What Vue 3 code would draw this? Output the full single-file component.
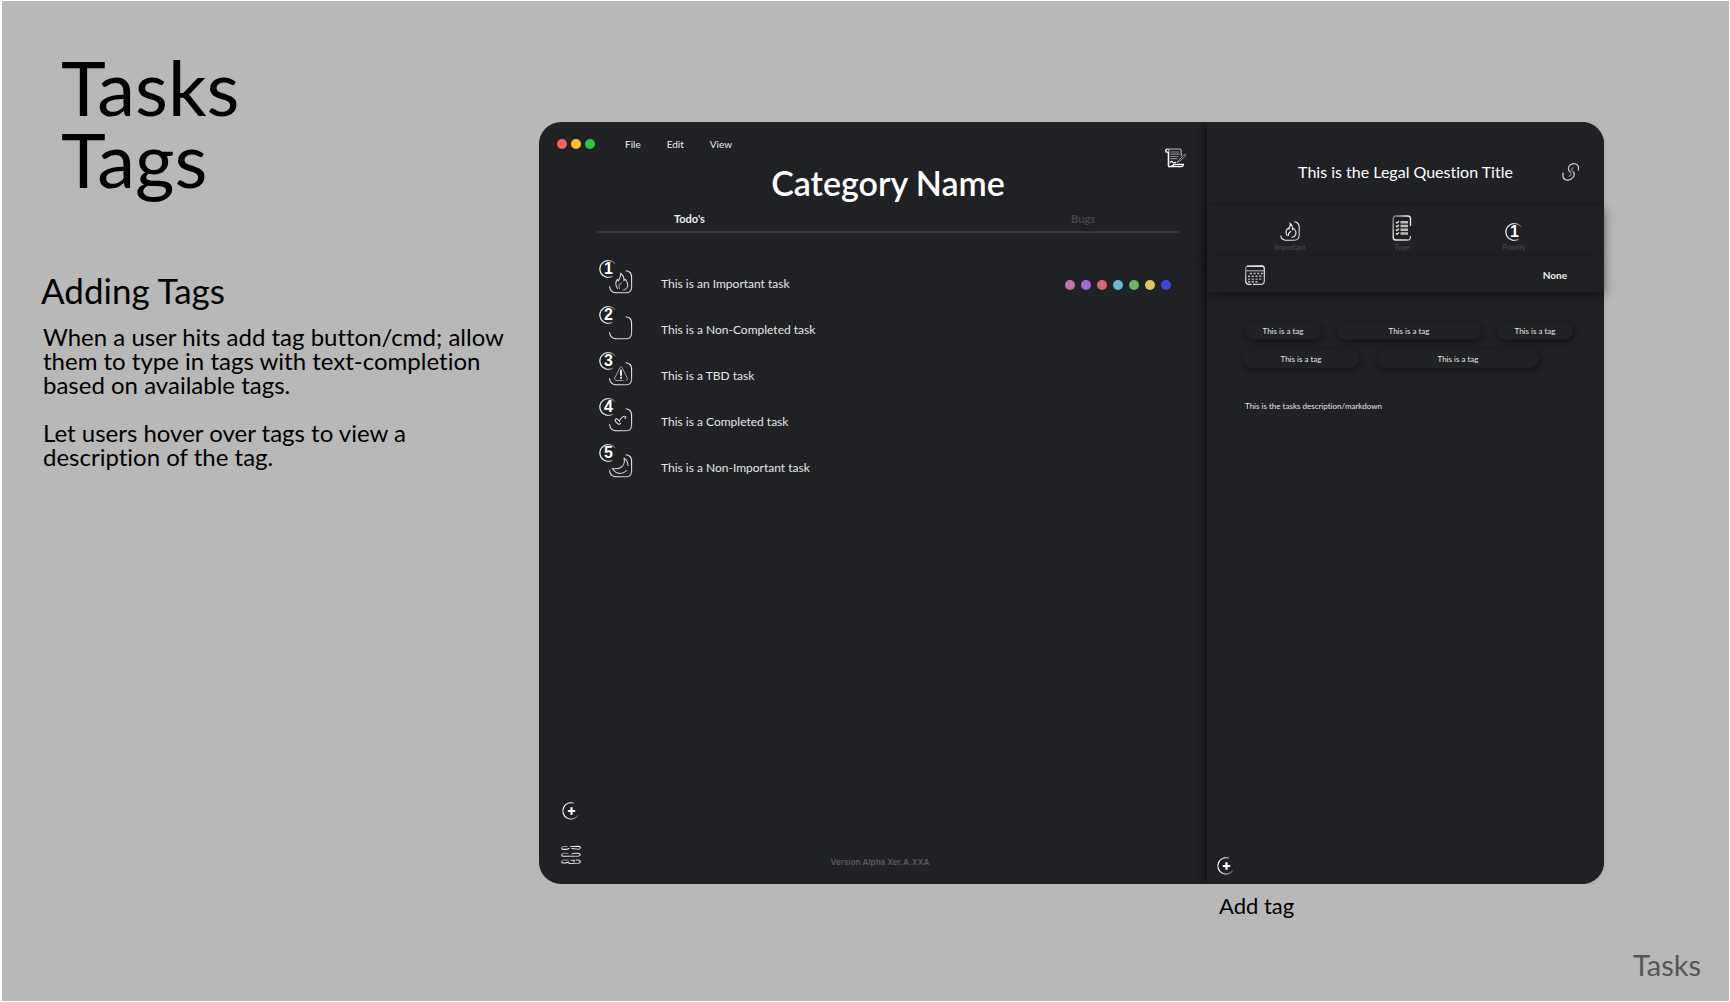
<script setup>
const menus = ['File', 'Edit', 'View']
const tasks = [
  { title: 'This is an Important task', icon: 'fire', dots: ['#cf6cb0', '#9d6ccf', '#d9656e', '#6cb9cf', '#67b767', '#dfc664', '#4046e2'] },
  { title: 'This is a Non-Completed task', icon: '' },
  { title: 'This is a TBD task', icon: 'warning' },
  { title: 'This is a Completed task', icon: 'check' },
  { title: 'This is a Non-Important task', icon: 'moon' },
]
const tagRows = [
  { name: 'first', sizes: [76, 144, 76] },
  { name: 'second', sizes: [116, 162] },
]
</script>

<template>
  <div class="page">
    <svg class="defs" width="0" height="0" aria-hidden="true">
      <defs>
        <linearGradient id="ring" x1="0" y1="0" x2="1" y2="0">
          <stop offset="0" stop-color="#fff" />
          <stop offset="0.5" stop-color="#ccc" />
          <stop offset="1" stop-color="#555" />
        </linearGradient>
        <linearGradient id="edge" x1="0" y1="0" x2="1" y2="1">
          <stop offset="0" stop-color="#777" />
          <stop offset="0.5" stop-color="#fff" />
          <stop offset="1" stop-color="#bbb" />
        </linearGradient>
      </defs>
    </svg>

    <div class="board">
      <section class="notes">
        <h1>Tasks<br />Tags</h1>
        <h2>Adding Tags</h2>
        <p>When a user hits add tag button/cmd; allow<br />them to type in tags with text-completion<br />based on available tags.</p>
        <p>Let users hover over tags to view a<br />description of the tag.</p>
      </section>

      <div class="mockup">
        <div class="window">
          <main class="main">
            <header class="topbar">
              <div class="lights"><i class="red"></i><i class="amber"></i><i class="green"></i></div>
              <nav class="menus"><button v-for="m in menus" :key="m">{{ m }}</button></nav>
              <button class="scroll" aria-label="Notes">
                <svg width="22" height="20" viewBox="0 0 22 20" fill="none" stroke="#fff">
                  <path d="M3.5 4V18" stroke-width="1.6" />
                  <path d="M3 4.200H1.400Q.5 3.500.8 2.300 1.200 1 2.600 1" stroke-width="1.300" />
                  <path d="M2.600 1H14.500Q16.500 1.200 16.200 4V8M2.600 1Q4.500 1.500 3.800 4.200" stroke="#bbb" stroke-width="1.100" />
                  <path d="M3 18.500H16Q18.500 18.400 18.400 16.300H9Q8.500 18 6 18.400" stroke-width="1.300" />
                  <path d="M5.500 4H14.500M5.500 6.200H14.500M5.500 8.500H13.500M5.500 10.700H12.500" stroke="#8a8a8a" stroke-width="1.200" />
                  <path d="M5 14.500Q7 12.500 7.500 14T11 14.200" stroke-width="1.300" />
                  <path d="M12 14.300 19.200 6.500Q21 5.800 20.700 7.800L14.500 13.500Z" stroke="#999" />
                </svg>
              </button>
            </header>

            <div class="content">
              <h3>Category Name</h3>
              <div class="tabs"><button class="active">Todo's</button><button>Bugs</button></div>
              <ul class="tasks">
                <li v-for="(t, i) in tasks" :key="t.title">
                  <button class="status" :aria-label="t.title">
                    <svg class="box" width="24" height="24" viewBox="0 0 24 24" fill="none" stroke="url(#edge)" stroke-width="1.1" stroke-linecap="round">
                      <path d="M17 .8Q22.500 1.500 22.600 7V17Q22.500 22.800 17 22.800H6.500Q1 22 .6 16.500" />
                      <g v-if="t.icon === 'fire'" stroke="#ddd">
                        <path d="M8.500 18.500Q5 13 8.500 9.500L9.500 10.800Q11.500 7.500 11.800 3.500 15.500 6.500 15 10.500L16.500 9.500Q19.500 13.500 18.500 17" />
                        <path d="M18.500 17Q17.500 19.500 14 20M10.500 18.500Q8.500 15 12.500 13" stroke="#999" />
                      </g>
                      <g v-else-if="t.icon === 'warning'" stroke="#aaa">
                        <path d="M5.500 16.500 11 5.500Q12 4 13 5.500L18.500 16.500Q18.800 18 17 18.300M14 18.500H7Q5.200 18 5.500 16.500" stroke-width=".9" />
                        <path d="M12 8.500V13M12 15.500V16" stroke="#fff" stroke-width="1.800" />
                      </g>
                      <path v-else-if="t.icon === 'check'" stroke="#ddd" d="M10.500 13.500Q8 9.500 6.300 11.500 5.500 13 8.800 15.700 10 16.800 11.500 15.500M10.500 12.500Q13.500 8 15.500 8.200 18 8.500 16 10.500" />
                      <path v-else-if="t.icon === 'moon'" stroke="#ccc" d="M15 4Q16.500 9.500 12.500 13 9 15.500 3.500 14.500 6 19.300 11.500 19.500 15 19.300 17.500 16.500M15 4Q18.800 6.500 19 11.500" />
                    </svg>
                    <span class="badge">
                      <svg width="18" height="18" viewBox="0 0 18 18" fill="none" stroke="url(#ring)" stroke-width="1.200"><path d="M16.200 4.200A8.400 8.400 0 1 0 13.500 16.200" /></svg>
                      <b>{{ i + 1 }}</b>
                    </span>
                  </button>
                  <span class="label">{{ t.title }}</span>
                  <span v-if="t.dots" class="dots"><i v-for="c in t.dots" :key="c" :style="{ background: c }"></i></span>
                </li>
              </ul>
            </div>

            <footer class="bottom">
              <div class="tools">
                <button aria-label="Add task">
                  <svg width="20" height="20" viewBox="0 0 20 20" fill="none"><path d="M13 2.200A8.200 8.200 0 1 0 17 14.200" stroke="url(#ring)" stroke-width="1.200" /><path d="M10.500 6.300V13.700M6.800 10H14.200" stroke="#fff" stroke-width="2.200" /></svg>
                </button>
                <button aria-label="Open menu">
                  <svg width="20" height="20" viewBox="0 0 20 20" fill="none" stroke="url(#edge)" stroke-width="1.100" stroke-linecap="round">
                    <path d="M6 1.500H2.500Q.6 1.700.6 3 .8 4.400 2.500 4.400H5.500L8 3.500M9.500 1.500 17 1.200Q19.500 1.500 19.300 3 19 4.500 17 4.300L11 3.500" />
                    <path d="M7 8.300H2.500Q.5 8.500.6 9.800.8 11.200 2.500 11.200H17Q19.300 11 19.300 9.600 19 8.200 17 8.300H14L11 8.800" />
                    <path d="M7 15H2.500Q.6 15.200.6 16.600.8 18 2.500 18H5L8 17M8 18.500 17 18.200Q19.400 18 19.300 16.500 19 15 17 15H15M10 15.200H13V17" />
                  </svg>
                </button>
              </div>
              <small>Version Alpha Xer.A.XXA</small>
            </footer>
          </main>

          <aside class="side">
            <header class="side-head">
              <h4>This is the Legal Question Title</h4>
              <button class="link" aria-label="Copy link">
                <svg width="18" height="18" viewBox="0 0 18 18" fill="none" stroke-width="1.200" stroke-linecap="round">
                  <path stroke="#ccc" d="M16.300 7.200Q17.500 2 13.300.8 8.500.2 6.600 4.200 5.800 7 8.200 9" />
                  <path stroke="#888" d="M11 4.800Q8.800 6 10.300 7.800L11.800 9.500M8.200 9Q9.800 11 8.500 12.500L7 13.200" />
                  <path stroke="#ddd" d="M1.200 10Q-.2 15.500 4.200 17 8.500 17.800 11 14.500 13 11.500 11.800 9.500" />
                </svg>
              </button>
            </header>

            <div class="band props">
              <button>
                <svg width="20" height="20" viewBox="0 0 20 20" fill="none" stroke="url(#edge)" stroke-width="1.100" stroke-linecap="round">
                  <path d="M14.500.8Q19 1.300 19.200 6V14Q19 19.200 14.500 19.200H5.500Q1.300 18.800.8 15" />
                  <path stroke="#eee" d="M7 14.500Q4.500 9.500 8.500 7L9 8Q10.500 5 10.200 2.500 13 5 12.500 8.500L13.800 7.500Q17 11 15.500 14 14.500 16 12 16.200M8.500 14.500Q7.800 12 10.800 10.500" />
                </svg>
                <span>Important</span>
              </button>
              <button>
                <svg width="20" height="26" viewBox="0 0 20 26" fill="none">
                  <path d="M18.500 11V4Q18.500 1 16 1H3.500Q1.200 1 1.200 4V22Q1.200 25 3.500 25H16Q18.500 25 18.500 21" stroke="url(#edge)" stroke-width="1.300" />
                  <path d="M8.500 7.300H16M8.500 11H16M8.500 14.700H16M8.500 18.500H16" stroke="#bbb" stroke-width="2.600" />
                  <path d="M4 7 5 8 7 6.300M4 10.800 5 11.800 7 10M4 14.500 5 15.500 7 13.800M4 18.300 5 19.300 7 17.500" stroke="#ddd" stroke-width="1.300" />
                </svg>
                <span>Type</span>
              </button>
              <button>
                <span class="badge inline">
                  <svg width="18" height="18" viewBox="0 0 18 18" fill="none" stroke="url(#ring)" stroke-width="1.200"><path d="M16.200 4.200A8.400 8.400 0 1 0 13.500 16.200" /></svg>
                  <b>1</b>
                </span>
                <span>Priority</span>
              </button>
            </div>

            <div class="band due">
              <button aria-label="Due date">
                <svg width="20" height="20" viewBox="0 0 20 20" fill="none">
                  <path d="M6.500 19.300H3.500Q.7 19 .7 16V3.500Q.7.800 3.500.8H16.500Q19.300.8 19.300 3.500V16Q19.300 19.300 16 19.300H8" stroke="url(#edge)" stroke-width="1.200" />
                  <path d="M2 1.300H18" stroke="#ddd" stroke-width="1.400" />
                  <path d="M1 5.800H19" stroke="#bbb" />
                  <path d="M4.800 8.500H18M3 11.300H18M3 14.100H17M3 16.800H14" stroke="#bbb" stroke-width="1.400" stroke-dasharray="2.200 1.500" />
                </svg>
              </button>
              <strong>None</strong>
            </div>

            <div class="tags">
              <div v-for="r in tagRows" :key="r.name" class="tag-row" :class="r.name">
                <button v-for="(w, i) in r.sizes" :key="i" :style="{ width: w + 'px' }">This is a tag</button>
              </div>
            </div>
            <p class="desc">This is the tasks description/markdown</p>

            <button class="add" aria-label="Add tag">
              <svg width="20" height="20" viewBox="0 0 20 20" fill="none"><path d="M13 2.200A8.200 8.200 0 1 0 17 14.200" stroke="url(#ring)" stroke-width="1.200" /><path d="M10.500 6.300V13.700M6.800 10H14.200" stroke="#fff" stroke-width="2.200" /></svg>
            </button>
          </aside>
        </div>
        <p class="caption">Add tag</p>
      </div>
    </div>
    <footer class="page-foot">Tasks</footer>
  </div>
</template>

<style>
body { margin: 0; background: #fff; }
</style>

<style scoped>
* { box-sizing: border-box; }
.page {
  min-height: 100vh;
  display: flex;
  flex-direction: column;
  background: #b8b8b8;
  border: 1px solid #fff;
  border-left-width: 2px;
  color: #000;
  font-family: Lato, "Noto Sans", sans-serif;
  font-variant-ligatures: none;
}
.defs { position: absolute; }
h1, h2, h3, h4, p, ul { margin: 0; padding: 0; font-weight: 400; }
button { padding: 0; border: 0; background: none; color: inherit; font: inherit; cursor: pointer; }
svg { display: block; }

.board { display: grid; grid-template-columns: 537px minmax(0, 1fr); padding-right: 125px; }
.notes { padding: 50px 0 0 39px; }
h1 { padding-left: 20px; font-size: 76px; line-height: 72px; }
h2 { margin-top: 75px; font-size: 35px; line-height: 40px; }
.notes p { margin-top: 15px; padding-left: 2px; font-size: 24px; line-height: 24px; white-space: nowrap; }
.notes p + p { margin-top: 24px; }

.mockup { padding-top: 121px; }
.window {
  display: grid;
  grid-template-columns: minmax(0, 1fr) 397px;
  min-height: calc(100vh - 240px);
  border-radius: 22px;
  background: #202124;
  color: #fff;
}
.main { display: flex; flex-direction: column; border-radius: 22px 0 0 22px; overflow: hidden; }
.topbar { display: flex; align-items: flex-start; height: 46px; padding: 14px 20px 0 18px; }
.lights { display: flex; gap: 4px; padding-top: 3px; }
.lights i, .dots i { width: 10px; height: 10px; border-radius: 50%; }
.red { background: #ff5f57; }
.amber { background: #febc2e; }
.green { background: #28c840; }
.menus { display: flex; gap: 26px; margin-left: 30px; font-size: 10px; line-height: 16px; color: #eee; }
.scroll { margin: 12px 0 0 auto; }

.content { padding: 0 28px 0 58px; }
h3 { text-align: center; font-size: 34px; line-height: 30px; font-weight: 600; }
.tabs {
  display: flex;
  justify-content: space-between;
  margin-top: 14px;
  padding: 0 84px 5px 77px;
  border-bottom: 2px solid #36373a;
  font-size: 11px;
  line-height: 14px;
  font-weight: 700;
  color: #434447;
}
.tabs .active { color: #eee; }
.tasks { margin-top: 27px; list-style: none; }
.tasks li { display: flex; align-items: flex-start; height: 46px; padding-left: 2px; }
.status { position: relative; width: 34px; height: 34px; flex: none; }
.box { margin: 10px 0 0 10px; }
.badge { position: absolute; left: 0; top: 0; width: 18px; height: 18px; display: grid; }
.badge svg, .badge b { grid-area: 1 / 1; }
.badge b { padding-left: 1px; font: 700 16px/18px "Liberation Sans", Arial, sans-serif; text-align: center; color: #fff; }
.badge.inline { position: relative; }
.label { margin: 16px 0 0 28px; font-size: 12px; line-height: 16px; color: #e6e6e6; }
.dots { display: flex; gap: 6px; margin: 20px 8px 0 auto; }

.bottom { display: flex; align-items: flex-end; margin-top: auto; padding: 0 28px 19px 22px; }
.tools { display: grid; gap: 24px; }
small { flex: 1; text-align: center; font: 700 8px/6px Inter, sans-serif; color: #55565a; }

.side {
  display: flex;
  flex-direction: column;
  border-radius: 0 22px 22px 0;
  background: #202124;
  box-shadow: -4px 0 8px -2px rgba(0, 0, 0, 0.6);
  clip-path: inset(0 -20px 0 -20px);
}
.side-head { display: grid; grid-template-columns: 1fr auto 1fr; align-items: center; height: 84px; padding: 15px 24px 0; }
h4 { grid-column: 2; font-size: 16px; line-height: 20px; }
.link { justify-self: end; }
.band { position: relative; background: #202124; box-shadow: 0 3px 10px rgba(0, 0, 0, 0.45); }
.props {
  display: grid;
  grid-template-columns: repeat(3, 112px);
  justify-content: center;
  height: 51px;
  padding: 0 7px 5px 0;
  font-size: 7px;
  line-height: 9px;
  font-weight: 700;
  color: #434446;
}
.props button { display: flex; flex-direction: column; align-items: center; justify-content: flex-end; gap: 2px; }
.due { display: flex; align-items: center; justify-content: space-between; height: 35px; padding: 0 37px 0 38px; }
.due strong { font-size: 10px; line-height: 14px; font-weight: 700; color: #eee; }
.tags { display: grid; gap: 10px; padding: 30px 31px 0 36px; }
.tag-row { display: flex; }
.first { gap: 16px; padding-left: 2px; }
.second { gap: 18px; }
.tag-row button {
  height: 18px;
  border-radius: 9px;
  background: #202124;
  box-shadow: 1px 2px 6px rgba(0, 0, 0, 0.45);
  font-size: 8px;
  line-height: 18px;
  color: #e6e6e6;
}
.desc { margin: 32px 38px 0; font-size: 8px; line-height: 12px; color: #e6e6e6; }
.add { align-self: flex-start; margin: auto 0 8px 9px; }

.caption { width: 385px; margin: 10px 0 0 auto; font-size: 22px; line-height: 24px; }
.page-foot { margin-top: auto; padding: 0 28px 18px; text-align: right; font-size: 29px; line-height: 36px; color: #565656; }
</style>
